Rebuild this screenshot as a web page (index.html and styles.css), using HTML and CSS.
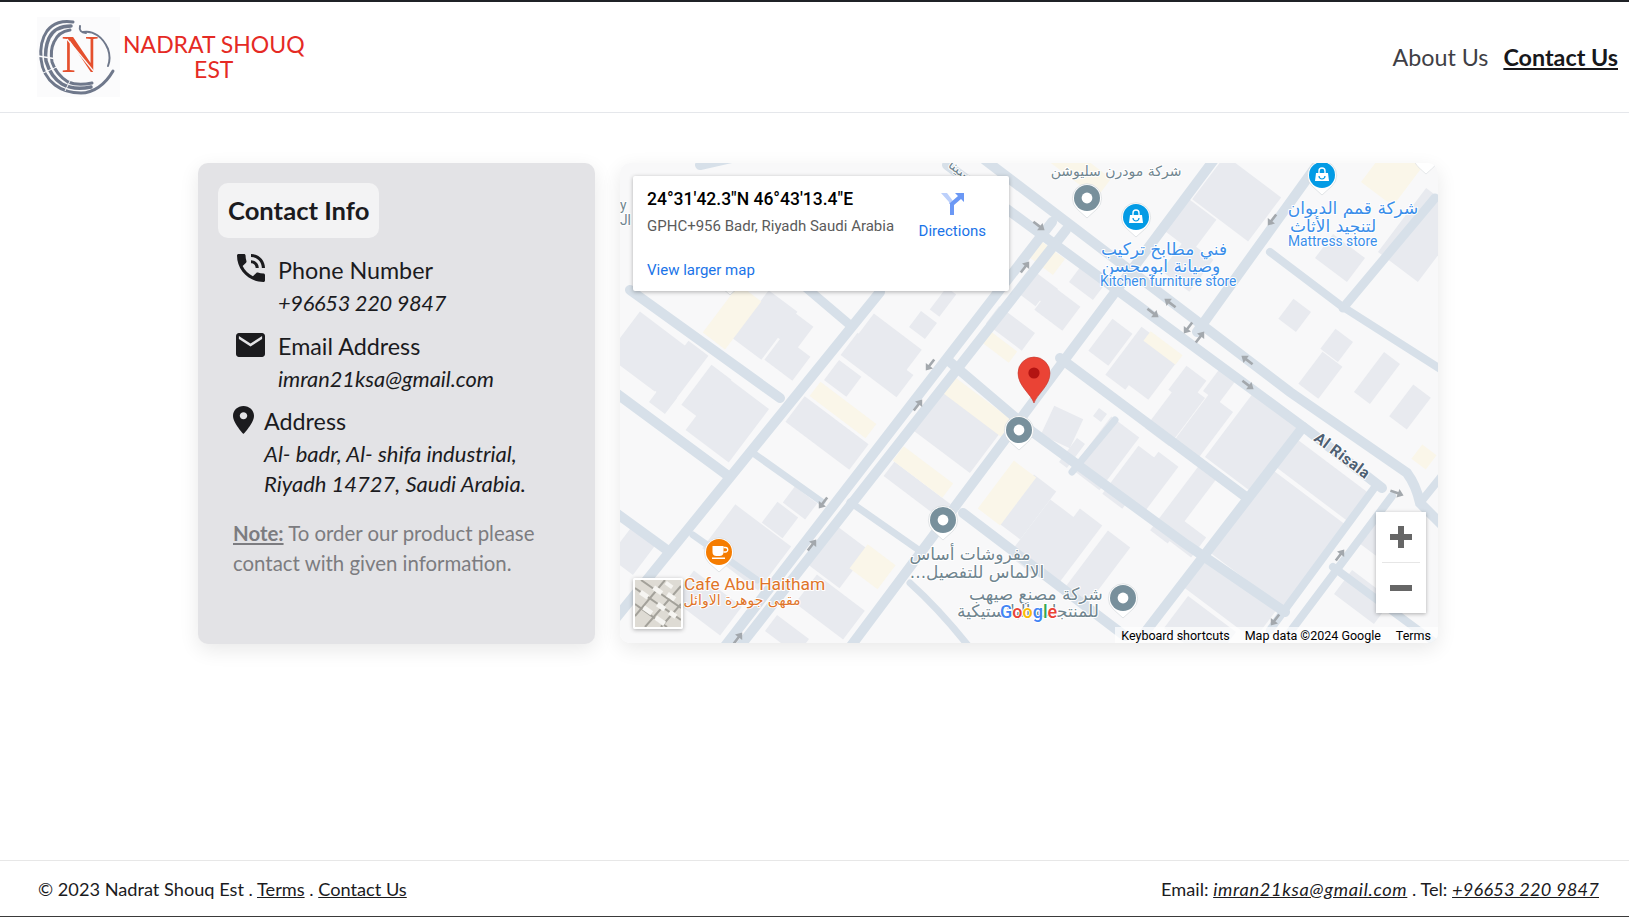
FILE: index.html
```html
<!DOCTYPE html>
<html lang="en">
<head>
    <meta charset="UTF-8">
    <title>Contact Us - Nadrat Shouq Est</title>
    <link rel="stylesheet" href="styles.css">
</head>
<body>
    <header class="site-header">
        <a class="brand" href="#">
            <svg class="brand-logo" viewBox="0 0 83 80">
                <rect width="83" height="80" fill="#fbfbfc"/>
                <g fill="none" stroke="#6f788b" stroke-linecap="round">
                    <path d="M36 5C26 3 16 6 10 14C5 21 3 30 4 42C5 52 10 62 18 68C26 74 34 76 44 76C56 76 68 68 76 54" stroke-width="3"/>
                    <path d="M34 9C24 9 16 13 12 21C9 28 8 36 9 44C12 54 17 62 25 67C34 72 44 72 54 70" stroke-width="3.5"/>
                    <path d="M33 13C26 14 20 18 17 25C14 31 14 39 15 45C18 54 23 60 31 65C38 68 46 68 55 66" stroke-width="3"/>
                    <path d="M46 15C56 13 66 20 71 32C73 38 73 44 71 49" stroke-width="2"/>
                    <path d="M43 9C42 13 44 16 49 16" stroke-width="2"/>
                </g>
                <path d="M1 39L20 42" stroke="#fbfbfc" stroke-width="1.300"/>
                <path d="M6 56L22 49" stroke="#fbfbfc" stroke-width="1"/>
                <path d="M28 74L34 62" stroke="#fbfbfc" stroke-width="1"/>
                <text class="logo-letter" x="43" y="55" text-anchor="middle">N</text>
                <path d="M30 22L58 56" stroke="#fbfbfc" stroke-width="1.200"/>
            </svg>
            <span class="brand-name">NADRAT SHOUQ<br>EST</span>
        </a>
        <nav class="site-nav">
            <a href="#">About Us</a>
            <a class="active" href="#">Contact Us</a>
        </nav>
    </header>

    <main class="contact-page">
        <section class="info-card">
            <h2 class="info-title">Contact Info</h2>
            <div class="contact-row">
                <svg class="icon-phone" viewBox="3 3 18 18"><path d="M20 15.5c-1.25 0-2.45-.2-3.57-.57-.35-.11-.74-.03-1.02.24l-2.2 2.2c-2.83-1.44-5.15-3.75-6.59-6.59l2.2-2.21c.28-.26.36-.65.25-1C8.7 6.45 8.5 5.25 8.5 4c0-.55-.45-1-1-1H4c-.55 0-1 .45-1 1 0 9.39 7.61 17 17 17 .55 0 1-.45 1-1v-3.5c0-.55-.45-1-1-1zM19 12h2c0-4.97-4.03-9-9-9v2c3.87 0 7 3.13 7 7zm-4 0h2c0-2.76-2.24-5-5-5v2c1.66 0 3 1.34 3 3z"/></svg>
                <div>
                    <h3>Phone Number</h3>
                    <p class="phone-value">+96653 220 9847</p>
                </div>
            </div>
            <div class="contact-row">
                <svg class="icon-mail" viewBox="2 4 20 16" preserveAspectRatio="none"><path d="M20 4H4c-1.1 0-1.99.9-1.99 2L2 18c0 1.1.9 2 2 2h16c1.1 0 2-.9 2-2V6c0-1.1-.9-2-2-2zm0 4l-8 5-8-5V6l8 5 8-5v2z"/></svg>
                <div>
                    <h3>Email Address</h3>
                    <p>imran21ksa@gmail.com</p>
                </div>
            </div>
            <div class="contact-row address-row">
                <svg class="icon-place" viewBox="5 2 14 20" preserveAspectRatio="none"><path d="M12 2C8.13 2 5 5.13 5 9c0 5.25 7 13 7 13s7-7.75 7-13c0-3.87-3.13-7-7-7zm0 9.5c-1.38 0-2.5-1.12-2.5-2.5s1.12-2.5 2.5-2.5 2.5 1.12 2.5 2.5-1.12 2.5-2.5 2.5z"/></svg>
                <div>
                    <h3>Address</h3>
                    <p>Al- badr, Al- shifa industrial,<br>Riyadh 14727, Saudi Arabia.</p>
                </div>
            </div>
            <p class="note"><b>Note:</b> To order our product please contact with given information.</p>
        </section>

        <section class="map">
            <svg class="map-canvas" viewBox="620 163 818 480">
                <defs>
                    <path id="arrow" d="M-7-1.3H1V-4.5L7 0L1 4.5V1.3H-7Z" fill="#a3a8ad"/>
                    <g id="pin-shape">
                        <path d="M0 20L-10 11A14.6 14.6 0 1 1 10 11Z" fill="#fff" stroke="#cfd3d6" stroke-width=".6"/>
                    </g>
                    <g id="pin-gray">
                        <use href="#pin-shape"/>
                        <circle r="13" fill="#78909c"/>
                        <circle r="5.4" fill="#fff"/>
                    </g>
                    <g id="pin-blue">
                        <use href="#pin-shape"/>
                        <circle r="13" fill="#039be5"/>
                        <path d="M-6-2H6L7 6H-7Z" fill="#fff"/>
                        <path d="M-3-2V-4A3 3 0 0 1 3-4V-2" fill="none" stroke="#fff" stroke-width="1.4"/>
                        <path d="M-3 1A3 3 0 0 0 3 1" fill="none" stroke="#039be5" stroke-width="1.2"/>
                    </g>
                </defs>

                <rect x="620" y="163" width="818" height="480" fill="#f8f8f9"/>

                <g fill="#e8eaef">
                    <rect x="-27" y="-34" width="54" height="67" transform="translate(727 420) rotate(37)"/>
                    <rect x="-40" y="-16" width="80" height="32" transform="translate(827 433) rotate(37)"/>
                    <rect x="-35" y="-25" width="70" height="50" transform="translate(957 432) rotate(37)"/>
                    <rect x="-35" y="-9" width="70" height="18" transform="translate(917 490) rotate(37)"/>
                    <rect x="-14" y="-30" width="28" height="60" transform="translate(1027 507) rotate(37)"/>
                    <rect x="-35" y="-27" width="70" height="55" transform="translate(747 547) rotate(37)"/>
                    <rect x="-13" y="-13" width="26" height="26" transform="translate(780 520) rotate(37)"/>
                    <rect x="-14" y="-10" width="28" height="20" transform="translate(800 503) rotate(37)"/>
                    <rect x="-20" y="-24" width="40" height="48" transform="translate(838 557) rotate(37)"/>
                    <rect x="-30" y="-18" width="60" height="36" transform="translate(830 607) rotate(37)"/>
                    <rect x="-30" y="-18" width="60" height="36" transform="translate(707 603) rotate(37)"/>
                    <rect x="-20" y="-10" width="40" height="20" transform="translate(787 635) rotate(37)"/>
                    <rect x="-15" y="-20" width="30" height="40" transform="translate(633 550) rotate(37)"/>
                    <rect x="-10" y="-10" width="20" height="20" transform="translate(663 400) rotate(37)"/>
                    <rect x="-18" y="-30" width="36" height="60" transform="translate(765 325) rotate(37)"/>
                    <rect x="-17" y="-15" width="35" height="30" transform="translate(790 328) rotate(37)"/>
                    <rect x="-17" y="-15" width="35" height="30" transform="translate(787 358) rotate(37)"/>
                    <rect x="-30" y="-28" width="60" height="55" transform="translate(647 352) rotate(37)"/>
                    <rect x="-12" y="-30" width="25" height="60" transform="translate(680 372) rotate(37)"/>
                    <rect x="-12" y="-25" width="25" height="50" transform="translate(706 392) rotate(37)"/>
                    <rect x="-30" y="-13" width="60" height="26" transform="translate(890 342) rotate(37)"/>
                    <rect x="-35" y="-14" width="70" height="28" transform="translate(877 365) rotate(37)"/>
                    <rect x="-14" y="-12" width="28" height="25" transform="translate(843 378) rotate(37)"/>
                    <rect x="-10" y="-10" width="20" height="20" transform="translate(923 325) rotate(37)"/>
                    <rect x="-6" y="-14" width="12" height="28" transform="translate(943 302) rotate(37)"/>
                    <rect x="-22" y="-11" width="45" height="22" transform="translate(1010 328) rotate(37)"/>
                    <rect x="-12" y="-12" width="25" height="25" transform="translate(1033 288) rotate(37)"/>
                    <rect x="-35" y="-27" width="70" height="55" transform="translate(1237 198) rotate(37)"/>
                    <rect x="-17" y="-20" width="35" height="40" transform="translate(1190 225) rotate(37)"/>
                    <rect x="-17" y="-20" width="35" height="40" transform="translate(1187 265) rotate(37)"/>
                    <rect x="-17" y="-15" width="35" height="30" transform="translate(1057 308) rotate(37)"/>
                    <rect x="-15" y="-10" width="30" height="20" transform="translate(1087 283) rotate(37)"/>
                    <rect x="-15" y="-10" width="30" height="20" transform="translate(1040 288) rotate(37)"/>
                    <rect x="-20" y="-15" width="40" height="30" transform="translate(1340 258) rotate(37)"/>
                    <rect x="-25" y="-40" width="50" height="80" transform="translate(1422 235) rotate(37)"/>
                    <rect x="-11" y="-12" width="22" height="25" transform="translate(1295 315) rotate(37)"/>
                    <rect x="-11" y="-12" width="22" height="25" transform="translate(1337 345) rotate(37)"/>
                    <rect x="-12" y="-20" width="25" height="40" transform="translate(1320 375) rotate(37)"/>
                    <rect x="-10" y="-25" width="20" height="50" transform="translate(1377 378) rotate(37)"/>
                    <rect x="-12" y="-30" width="25" height="60" transform="translate(1133 358) rotate(37)"/>
                    <rect x="-12" y="-20" width="25" height="40" transform="translate(1110 342) rotate(37)"/>
                    <rect x="-12" y="-25" width="25" height="50" transform="translate(1153 372) rotate(37)"/>
                    <rect x="-12" y="-15" width="25" height="30" transform="translate(1187 385) rotate(37)"/>
                    <rect x="-10" y="-15" width="20" height="30" transform="translate(1220 385) rotate(37)"/>
                    <rect x="-16" y="-16" width="32" height="32" transform="translate(1062 427) rotate(25)"/>
                    <rect x="-5" y="-15" width="10" height="30" transform="translate(1072 453) rotate(37)"/>
                    <rect x="-5" y="-5" width="10" height="10" transform="translate(1100 415) rotate(37)"/>
                    <rect x="-17" y="-33" width="35" height="66" transform="translate(1105 453) rotate(37)"/>
                    <rect x="-12" y="-30" width="25" height="60" transform="translate(1130 477) rotate(37)"/>
                    <rect x="-12" y="-30" width="25" height="60" transform="translate(1150 483) rotate(37)"/>
                    <rect x="-15" y="-30" width="30" height="60" transform="translate(1175 413) rotate(37)"/>
                    <rect x="-15" y="-30" width="30" height="60" transform="translate(1203 427) rotate(37)"/>
                    <rect x="-30" y="-40" width="60" height="80" transform="translate(1253 443) rotate(37)"/>
                    <rect x="-47" y="-17" width="95" height="35" transform="translate(1323 480) rotate(37)"/>
                    <rect x="-47" y="-32" width="95" height="65" transform="translate(1290 523) rotate(37)"/>
                    <rect x="-47" y="-22" width="95" height="45" transform="translate(1262 563) rotate(37)"/>
                    <rect x="-11" y="-40" width="22" height="80" transform="translate(1183 505) rotate(37)"/>
                    <rect x="-15" y="-12" width="30" height="25" transform="translate(1187 538) rotate(37)"/>
                    <rect x="-16" y="-35" width="32" height="70" transform="translate(1042 537) rotate(37)"/>
                    <rect x="-14" y="-35" width="28" height="70" transform="translate(1070 545) rotate(37)"/>
                    <rect x="-14" y="-35" width="28" height="70" transform="translate(1098 567) rotate(37)"/>
                    <rect x="-45" y="-20" width="90" height="40" transform="translate(1230 597) rotate(37)"/>
                    <rect x="-30" y="-20" width="60" height="40" transform="translate(1200 630) rotate(37)"/>
                    <rect x="-20" y="-15" width="40" height="30" transform="translate(1380 540) rotate(37)"/>
                    <rect x="-11" y="-20" width="22" height="40" transform="translate(1410 407) rotate(37)"/>
                    <rect x="-25" y="-15" width="50" height="30" transform="translate(1363 597) rotate(37)"/>
                </g>
                <g fill="#faf6e9">
                    <rect x="-35" y="-9" width="70" height="18" transform="translate(843 410) rotate(37)"/>
                    <rect x="-38" y="-10" width="76" height="20" transform="translate(978 407) rotate(37)"/>
                    <rect x="-31" y="-9" width="62" height="18" transform="translate(923 472) rotate(37)"/>
                    <rect x="-14" y="-30" width="28" height="60" transform="translate(1007 493) rotate(37)"/>
                    <rect x="-18" y="-15" width="35" height="30" transform="translate(873 567) rotate(37)"/>
                    <rect x="-14" y="-30" width="28" height="60" transform="translate(732 317) rotate(37)"/>
                    <rect x="-15" y="-10" width="30" height="20" transform="translate(1047 258) rotate(37)"/>
                    <rect x="-20" y="-7" width="40" height="14" transform="translate(997 345) rotate(37)"/>
                    <rect x="-20" y="-6" width="40" height="12" transform="translate(1163 348) rotate(37)"/>
                    <rect x="-9" y="-9" width="18" height="18" transform="translate(1424 457) rotate(37)"/>
                    <rect x="-30" y="-12" width="60" height="24" transform="translate(1080 170) rotate(37)"/>
                    <rect x="-20" y="-30" width="40" height="60" transform="translate(1395 170) rotate(37)"/>
                </g>

                <g fill="none" stroke="#d7e0e9" stroke-width="10" stroke-linecap="round">
                    <!-- roads heading north east -->
                    <path d="M722 650L1052 222"/>
                    <path d="M737 650L1066 230"/>
                    <path d="M848 650L1216 157"/>
                    <path d="M1197 332L1322 158"/>
                    <path d="M1115 420L1072 472" stroke-width="7"/>
                    <path d="M1435 198L1343 308" stroke-width="9"/>
                    <path d="M1375 487L1270 630" stroke-width="8"/>
                    <path d="M1392 496L1287 636" stroke-width="8"/>
                    <path d="M1303 427L1143 635"/>
                    <path d="M612 623L880 292"/>
                    <path d="M700 165L745 155"/>
                    <path d="M1420 503L1445 472" stroke-width="8"/>
                    <!-- roads heading south east -->
                    <path d="M947 165L1310 432L1382 488"/>
                    <path d="M985 160L1290 392L1407 473Q1416 485 1420 503L1445 528"/>
                    <path d="M950 362L1030 430L1187 545L1285 612"/>
                    <path d="M1060 358L1246 497"/>
                    <path d="M963 513L1125 636"/>
                    <path d="M1270 252L1340 305L1445 372" stroke-width="8"/>
                    <path d="M1333 567L1445 650" stroke-width="8"/>
                    <path d="M612 390L727 475"/>
                    <path d="M612 510L667 550"/>
                    <path d="M693 535L757 580" stroke-width="7"/>
                    <path d="M753 453L822 502" stroke-width="7"/>
                    <path d="M850 502L923 553" stroke-width="7"/>
                    <path d="M910 583Q940 610 970 648" stroke-width="7"/>
                    <path d="M630 290L780 398"/>
                    <path d="M797 280L850 325" stroke-width="9"/>
                </g>

                <g>
                    <use href="#arrow" transform="translate(1039 226) rotate(37)"/>
                    <use href="#arrow" transform="translate(1153 313) rotate(37)"/>
                    <use href="#arrow" transform="translate(1248 385) rotate(37)"/>
                    <use href="#arrow" transform="translate(1397 493) rotate(20)"/>
                    <use href="#arrow" transform="translate(1170 303) rotate(217)"/>
                    <use href="#arrow" transform="translate(1247 360) rotate(217)"/>
                    <use href="#arrow" transform="translate(1025 267) rotate(-53)"/>
                    <use href="#arrow" transform="translate(1200 337) rotate(-53)"/>
                    <use href="#arrow" transform="translate(918 405) rotate(-53)"/>
                    <use href="#arrow" transform="translate(812 545) rotate(-53)"/>
                    <use href="#arrow" transform="translate(738 638) rotate(-53)"/>
                    <use href="#arrow" transform="translate(1340 555) rotate(-53)"/>
                    <use href="#arrow" transform="translate(930 365) rotate(127)"/>
                    <use href="#arrow" transform="translate(1272 220) rotate(127)"/>
                    <use href="#arrow" transform="translate(1188 328) rotate(127)"/>
                    <use href="#arrow" transform="translate(823 503) rotate(127)"/>
                    <use href="#arrow" transform="translate(1275 620) rotate(127)"/>
                </g>

                <use href="#pin-blue" transform="translate(730 275)"/>
                <use href="#pin-gray" transform="translate(1087 198)"/>
                <use href="#pin-blue" transform="translate(1136 217)"/>
                <use href="#pin-blue" transform="translate(1322 175)"/>
                <use href="#pin-gray" transform="translate(1019 430)"/>
                <use href="#pin-gray" transform="translate(943 520)"/>
                <use href="#pin-gray" transform="translate(1123 598)"/>
                <g transform="translate(1426 158) scale(.8)"><use href="#pin-shape"/></g>
                <g transform="translate(719 552)">
                    <use href="#pin-shape"/>
                    <circle r="13" fill="#f57c00"/>
                    <path d="M-6.5-6H4.5V0A4 4 0 0 1 .5 4H-2.500A4 4 0 0 1-6.500 0Z" fill="#fff"/>
                    <path d="M4.500-4.500H6.500A2 2 0 0 1 6.500 0H4.500" fill="none" stroke="#fff" stroke-width="1.300"/>
                    <rect x="-7" y="5.500" width="13" height="1.500" fill="#fff"/>
                </g>

                <g class="map-labels">
                    <text class="lbl-gray lbl-ar" x="1116" y="176" text-anchor="middle">شركة مودرن سليوشن</text>
                    <text class="lbl-blue lbl-ar-big" x="1353" y="214" text-anchor="middle">شركة قمم الديوان</text>
                    <text class="lbl-blue lbl-ar-big" x="1333" y="232" text-anchor="middle">لتنجيد الأثاث</text>
                    <text class="lbl-blue lbl-en" x="1288" y="246">Mattress store</text>
                    <text class="lbl-blue lbl-ar-big" x="1164" y="255" text-anchor="middle">فني مطابخ تركيب</text>
                    <text class="lbl-blue lbl-ar-big" x="1161" y="272" text-anchor="middle">وصيانة ابومحسن</text>
                    <text class="lbl-blue lbl-en" x="1100" y="286">Kitchen furniture store</text>
                    <text class="lbl-gray lbl-ar-big" x="970" y="560" text-anchor="middle">مفروشات أساس</text>
                    <text class="lbl-gray lbl-ar-big" x="977" y="578" text-anchor="middle">الالماس للتفصيل...</text>
                    <text class="lbl-gray lbl-ar-big" x="1036" y="600" text-anchor="middle">شركة مصنع صيهب</text>
                    <text class="lbl-gray lbl-ar-big" x="1028" y="617" text-anchor="middle">للمنتجات البلاستيكية</text>
                    <text class="lbl-orange lbl-cafe" x="684" y="590">Cafe Abu Haitham</text>
                    <text class="lbl-orange lbl-ar" x="742" y="605" text-anchor="middle">مقهى جوهرة الاوائل</text>
                    <text class="lbl-road" transform="translate(1313 440) rotate(37)">Al Risala</text>
                    <text class="lbl-gray lbl-en" x="620" y="210">y</text>
                    <text class="lbl-gray lbl-en" x="620" y="225">Jl</text>
                    <text class="lbl-gray lbl-ar" x="985" y="195" transform="rotate(37 985 195)">ابن سينا</text>
                </g>

                <g class="map-google">
                    <text x="1000" y="618"><tspan fill="#4285f4">G</tspan><tspan fill="#ea4335">o</tspan><tspan fill="#fbbc05">o</tspan><tspan fill="#4285f4">g</tspan><tspan fill="#34a853">l</tspan><tspan fill="#ea4335">e</tspan></text>
                </g>

                <!-- red marker -->
                <path d="M1034 403C1031 394 1018 386 1018 373A16 16 0 0 1 1050 373C1050 386 1037 394 1034 403Z" fill="#ea4335" stroke="#c5372b" stroke-width=".6"/>
                <circle cx="1034" cy="373" r="5.600" fill="#b31412"/>
            </svg>

            <div class="place-card">
                <div class="place-main">
                    <div class="place-text">
                        <div class="place-coords">24°31'42.3"N 46°43'13.4"E</div>
                        <div class="place-address">GPHC+956 Badr, Riyadh Saudi Arabia</div>
                    </div>
                    <a class="place-directions" href="#">
                        <svg viewBox="0 0 24 24" width="24" height="24">
                            <path d="M1 2H7L13 10V13H9V11Z" fill="#bcd0fb"/>
                            <path d="M10 24V12L18 5L15 2H24V11L21 8L14 14V24Z" fill="#6b98f5"/>
                        </svg>
                        <span>Directions</span>
                    </a>
                </div>
                <a class="place-larger" href="#">View larger map</a>
            </div>

            <div class="map-thumb">
                <svg viewBox="0 0 46 47">
                    <rect width="46" height="47" fill="#dedbd4"/>
                    <g stroke="#a3a19a" stroke-width="2">
                        <path d="M0 8L46 40"/>
                        <path d="M6 0L46 28"/>
                        <path d="M0 24L32 47"/>
                        <path d="M10 47L46 6"/>
                        <path d="M0 36L30 0"/>
                        <path d="M26 47L46 24"/>
                    </g>
                    <g fill="#f6f5f2">
                        <rect x="5" y="12" width="9" height="5" transform="rotate(35 9 14)"/>
                        <rect x="18" y="8" width="10" height="5" transform="rotate(35 23 10)"/>
                        <rect x="32" y="14" width="9" height="5" transform="rotate(35 36 16)"/>
                        <rect x="8" y="28" width="10" height="5" transform="rotate(35 13 30)"/>
                        <rect x="22" y="24" width="9" height="5" transform="rotate(35 26 26)"/>
                        <rect x="20" y="38" width="11" height="5" transform="rotate(35 25 40)"/>
                        <rect x="34" y="32" width="8" height="5" transform="rotate(35 38 34)"/>
                        <rect x="30" y="3" width="8" height="4" transform="rotate(35 34 5)"/>
                    </g>
                </svg>
            </div>

            <div class="zoom-control">
                <button class="zoom-btn" type="button"><span class="bar-h"></span><span class="bar-v"></span></button>
                <div class="zoom-sep"></div>
                <button class="zoom-btn" type="button"><span class="bar-h"></span></button>
            </div>

            <div class="map-attrib">
                <span>Keyboard shortcuts</span>
                <span>Map data ©2024 Google</span>
                <span>Terms</span>
            </div>
        </section>
    </main>

    <footer class="site-footer">
        <div>© 2023 Nadrat Shouq Est . <a href="#">Terms</a> . <a href="#">Contact Us</a></div>
        <div>Email: <a class="footer-email" href="#">imran21ksa@gmail.com</a> . Tel: <a class="footer-tel" href="#">+96653 220 9847</a></div>
    </footer>
</body>
</html>
```

FILE: styles.css
```css
* {
    box-sizing: border-box;
}
html, body {
    margin: 0;
    padding: 0;
}
body {
    display: flex;
    flex-direction: column;
    height: 917px;
    overflow: hidden;
    background: #fff;
    color: #1b1b1e;
    font-family: Lato, 'Noto Sans', sans-serif;
    border-top: 2px solid #1f2226;
    border-bottom: 1px solid #3a3a3a;
}
a {
    color: inherit;
}

/* header */
.site-header {
    display: flex;
    justify-content: space-between;
    align-items: center;
    height: 111px;
    padding: 0 11px 0 37px;
    border-bottom: 1px solid #e5e7eb;
    flex-shrink: 0;
}
.brand {
    display: flex;
    align-items: center;
    gap: 3px;
    text-decoration: none;
}
.brand-logo {
    width: 83px;
    height: 80px;
    display: block;
}
.logo-letter {
    font-family: 'Liberation Serif', serif;
    font-size: 52px;
    fill: #e5502e;
}
.brand-name {
    color: #e52a24;
    font-size: 23px;
    line-height: 25px;
    text-align: center;
    margin-top: -1px;
}
.site-nav {
    display: flex;
    gap: 15px;
    font-size: 23.3px;
    margin-top: -1px;
}
.site-nav a {
    text-decoration: none;
    color: #3f3f46;
}
.site-nav a.active {
    color: #18181b;
    font-weight: 700;
    text-decoration: underline;
}

/* main */
.contact-page {
    flex: 1;
    display: flex;
    align-items: flex-start;
    gap: 25px;
    padding: 50px 0 0 198px;
}
.info-card {
    width: 397px;
    height: 481px;
    padding: 20px;
    background: #e3e3e6;
    border-radius: 10px;
    box-shadow: 0 6px 20px rgba(0, 0, 0, .09);
}
.info-title {
    display: inline-block;
    width: 161px;
    margin: 0 0 16px;
    padding: 0 0 0 10px;
    height: 55px;
    line-height: 54px;
    background: #f3f3f4;
    border-radius: 10px;
    font-size: 25.6px;
    font-weight: 700;
    white-space: nowrap;
}
.contact-row {
    display: flex;
    gap: 13px;
    padding-left: 19px;
    margin-bottom: 11.5px;
}
.contact-row h3 {
    margin: 0;
    font-size: 23.3px;
    font-weight: 400;
    line-height: 33px;
}
.contact-row p {
    margin: 1px 0 0;
    font-size: 21.8px;
    font-style: italic;
    line-height: 30px;
}
.contact-row p.phone-value {
    letter-spacing: -.3px;
}
.address-row {
    gap: 10px;
    padding-left: 15px;
}
.address-row p {
    font-size: 22px;
}
.icon-phone {
    width: 28px;
    height: 28px;
    flex-shrink: 0;
    fill: #1b1b1e;
}
.icon-mail {
    width: 29px;
    height: 24px;
    margin: 3px -1px 0 -1px;
    flex-shrink: 0;
    fill: #1b1b1e;
}
.icon-mail + div {
    margin-left: 1px;
}
.icon-place {
    width: 21px;
    height: 28px;
    margin-top: 1px;
    flex-shrink: 0;
    fill: #1b1b1e;
}
.note {
    margin: 19px 0 0 15px;
    font-size: 20.4px;
    line-height: 30px;
    color: #7c7c80;
}
.note b {
    font-weight: 700;
    text-decoration: underline;
}

/* map */
.map {
    position: relative;
    width: 818px;
    height: 480px;
    border-radius: 10px;
    overflow: hidden;
    box-shadow: 0 6px 20px rgba(0, 0, 0, .09);
}
.map-canvas {
    display: block;
    width: 818px;
    height: 480px;
}
.map-labels text {
    paint-order: stroke;
    stroke: #fff;
    stroke-width: 2px;
    stroke-linejoin: round;
}
.lbl-ar {
    font-family: 'DejaVu Sans', sans-serif;
    font-size: 14px;
    direction: rtl;
}
.lbl-ar-big {
    font-family: 'DejaVu Sans', sans-serif;
    font-size: 17px;
    direction: rtl;
}
.lbl-en {
    font-family: Roboto, sans-serif;
    font-size: 13.8px;
}
.lbl-cafe {
    font-family: Roboto, sans-serif;
    font-size: 17.4px;
}
.lbl-road {
    font-family: Roboto, sans-serif;
    font-size: 15.5px;
    font-weight: 700;
    letter-spacing: .5px;
    fill: #4e6072;
}
.lbl-gray {
    fill: #70858f;
}
.lbl-blue {
    fill: #3a8eea;
}
.lbl-orange {
    fill: #e0752a;
}
.map-google text {
    font-family: Roboto, sans-serif;
    font-size: 18px;
    font-weight: 500;
    paint-order: stroke;
    stroke: #fff;
    stroke-width: 2px;
}

.place-card {
    position: absolute;
    left: 13px;
    top: 13px;
    width: 376px;
    height: 115px;
    padding: 13px 14px;
    background: #fff;
    border-radius: 2px;
    box-shadow: 0 1px 4px rgba(0, 0, 0, .3);
    font-family: Roboto, sans-serif;
}
.place-main {
    display: flex;
    justify-content: space-between;
    height: 67px;
}
.place-coords {
    font-size: 17.5px;
    font-weight: 500;
    color: #000;
    line-height: 21px;
}
.place-address {
    margin-top: 6px;
    font-size: 15px;
    line-height: 20px;
    color: #5b5b5b;
}
.place-directions {
    display: flex;
    flex-direction: column;
    align-items: center;
    gap: 7px;
    margin: 2px 9px 0 0;
    text-decoration: none;
    color: #1a73e8;
    font-size: 15px;
}
.place-larger {
    display: block;
    margin-top: 5px;
    color: #1a73e8;
    text-decoration: none;
    font-size: 15px;
}
.map-thumb {
    position: absolute;
    left: 13px;
    top: 415px;
    width: 50px;
    height: 51px;
    border: 2px solid #fff;
    border-radius: 2px;
    box-shadow: 0 1px 4px rgba(0, 0, 0, .3);
    overflow: hidden;
}
.map-thumb svg {
    display: block;
    width: 46px;
    height: 47px;
    filter: blur(.6px);
}
.zoom-control {
    position: absolute;
    left: 756px;
    top: 349px;
    width: 50px;
    height: 101px;
    background: #fff;
    box-shadow: 0 1px 4px rgba(0, 0, 0, .3);
}
.zoom-btn {
    position: relative;
    display: block;
    width: 50px;
    height: 50px;
    padding: 0;
    border: none;
    background: none;
}
.zoom-sep {
    height: 1px;
    margin: 0 6px;
    background: #e6e6e6;
}
.bar-h {
    position: absolute;
    left: 14px;
    top: 22px;
    width: 22px;
    height: 6px;
    background: #666;
}
.bar-v {
    position: absolute;
    left: 22px;
    top: 14px;
    width: 6px;
    height: 22px;
    background: #666;
}
.map-attrib {
    position: absolute;
    right: 0;
    bottom: 0;
    display: flex;
    gap: 15px;
    height: 16px;
    padding: 0 7px 0 6px;
    background: rgba(255, 255, 255, .7);
    font-family: Roboto, sans-serif;
    font-size: 12.5px;
    line-height: 18px;
    color: #000;
}

/* footer */
.site-footer {
    display: flex;
    justify-content: space-between;
    align-items: center;
    height: 56px;
    padding: 0 30px 0 38px;
    border-top: 1px solid #e7e7e7;
    font-size: 18.2px;
    flex-shrink: 0;
}
.footer-email {
    font-style: italic;
    letter-spacing: .7px;
}
.footer-tel {
    font-style: italic;
    letter-spacing: .2px;
}
```
